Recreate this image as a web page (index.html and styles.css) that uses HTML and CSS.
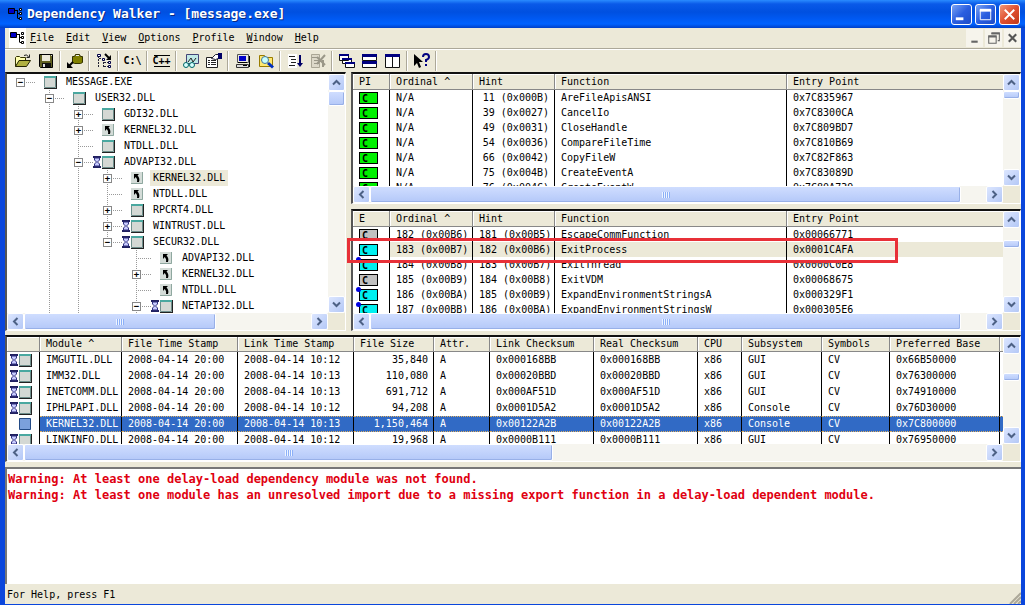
FILE: index.html
```html
<!DOCTYPE html>
<html lang="en">
<head>
<meta charset="utf-8">
<title>Dependency Walker - [message.exe]</title>
<link rel="stylesheet" href="styles.css">
</head>
<body>
<svg class="defs" aria-hidden="true">
  <symbol id="app" viewBox="0 0 15 14"><path fill="#0000c8" stroke="#000" d="M.5 1.5h6v5h-6z"/><path fill="none" stroke="#000" d="M7 3.5h3M9.5 3v8M9.5 6.500h3M9.5 11.5h3"/><path fill="#fff" stroke="#000" d="M11.500 1.500h2v2h-2zM11.500 5.500h2v2h-2zM11.500 10.500h2v2h-2z"/></symbol>
  <symbol id="mod" viewBox="0 0 24 16"><path fill="#d4d8d4" stroke="#6f8f8c" d="M9.500 2.500h11v11h-11z"/><path fill="#4aa8a0" d="M9 2h12v2H9z"/><path stroke="#222" fill="none" d="M21.500 2v12.500M9 14.500h13"/></symbol>
  <symbol id="dmod" viewBox="0 0 24 16"><use href="#mod"/><path fill="#202060" d="M0 2h8v2H0zM0 12h8v2H0z"/><path fill="#c8ccff" stroke="#303080" d="M1.500 4v2l2 2-2 2v2h5v-2l-2-2 2-2V4z"/></symbol>
  <symbol id="dup" viewBox="0 0 24 16"><path fill="#d4dcd8" d="M9 2h12v12H9z"/><path fill="none" stroke="#8fa8a0" d="M20.500 2v11.500H9"/><path fill="#000" d="M12 4h5l-1.500 1.500C17 7 18 9 17 12h-2c.5-2 0-3.500-1.300-5L12 9z"/></symbol>
  <symbol id="selmod" viewBox="0 0 24 16"><path fill="#7ba0dc" stroke="#234a86" d="M9.500 2.500h11v11h-11z"/></symbol>
  <symbol id="up" viewBox="0 0 9 9"><path fill="none" stroke="#4d6185" stroke-width="2" d="M1 6.500 4.500 3 8 6.500"/></symbol>
  <symbol id="down" viewBox="0 0 9 9"><path fill="none" stroke="#4d6185" stroke-width="2" d="M1 2.500 4.500 6 8 2.500"/></symbol>
  <symbol id="left" viewBox="0 0 9 9"><path fill="none" stroke="#4d6185" stroke-width="2" d="M6.500 1 3 4.500 6.500 8"/></symbol>
  <symbol id="right" viewBox="0 0 9 9"><path fill="none" stroke="#4d6185" stroke-width="2" d="M2.500 1 6 4.500 2.500 8"/></symbol>
</svg>
<div class="window">
  <header class="titlebar">
    <svg class="app-icon"><use href="#app"/></svg>
    <h1>Dependency Walker - [message.exe]</h1>
    <button class="cap" aria-label="Minimize"><svg viewBox="0 0 20 20"><path fill="#fff" d="M4 13h8v3H4z"/></svg></button>
    <button class="cap" aria-label="Maximize"><svg viewBox="0 0 20 20"><path fill="none" stroke="#fff" d="M4.500 5v10.500h11V5"/><path fill="#fff" d="M4 4h12v3H4z"/></svg></button>
    <button class="cap close" aria-label="Close"><svg viewBox="0 0 20 20"><path stroke="#fff" stroke-width="2" d="m5 5 10 10M15 5 5 15"/></svg></button>
  </header>
  <nav class="menubar">
    <span class="menu-icon"><svg class="app-icon"><use href="#app"/></svg></span>
    <button class="menu"><u>F</u>ile</button>
    <button class="menu"><u>E</u>dit</button>
    <button class="menu"><u>V</u>iew</button>
    <button class="menu"><u>O</u>ptions</button>
    <button class="menu"><u>P</u>rofile</button>
    <button class="menu"><u>W</u>indow</button>
    <button class="menu"><u>H</u>elp</button>
    <span class="mdi">
      <button aria-label="Minimize document"><svg viewBox="0 0 16 16"><path fill="#666" d="M5 10h6v2H5z"/></svg></button>
      <button aria-label="Restore document"><svg viewBox="0 0 16 16"><path fill="none" stroke="#666" d="M3.500 6v6.500h7V6M6 3.500h7.500V10H12"/><path fill="#666" d="M3 5h8v2H3zM6 2h8v2H6z"/></svg></button>
      <button aria-label="Close document"><svg viewBox="0 0 16 16"><path stroke="#555" stroke-width="2" d="m4.500 4 7 7M11.500 4l-7 7"/></svg></button>
    </span>
  </nav>
  <div class="toolbar">
    <button aria-label="Open"><svg viewBox="0 0 16 16"><path fill="#ffffb0" stroke="#333300" d="M.5 13.500v-9l1-1h3l1 1h5v3"/><path fill="#b0b040" stroke="#222200" d="M.5 13.500 4 7.500h11.500l-4 6z"/><path fill="none" stroke="#222" d="M9 2.500q3-2 4.500 1.500M14.500 1.500v3h-3"/></svg></button>
    <button aria-label="Save"><svg viewBox="0 0 16 16"><path fill="#606020" stroke="#000" d="M1.500 1.500h13v13h-12l-1-1z"/><path fill="#ece9d8" d="M4 2h8v6H4z"/><path fill="#111" d="M4 10h9v4H4z"/><path fill="#ddd" d="M5 11h2v3H5zM13 2h1v1h-1z"/></svg></button>
    <i></i>
    <button aria-label="Auto expand"><svg viewBox="0 0 16 16"><path fill="#808000" stroke="#333300" d="M5.500 3.500h2l1-2h4l1 2h2v6l-2 1h-6l-2-1z"/><path fill="#eee" d="M9 2h3v1H9z"/><path fill="none" stroke="#000" stroke-width="2" d="m6 9-4 4"/><path fill="#000" d="M0 9v6h6z"/></svg></button>
    <i></i>
    <button aria-label="Full paths"><svg viewBox="0 0 16 16"><path fill="none" stroke="#223" stroke-dasharray="2 1" d="M2.500 3v11M3 5.500h3M7.500 6v8M8 9.500h4M8 13.500h4"/><path fill="#fff" stroke="#004" d="M1.500 1.500h3v2h-3zM6.500 5.500h2v2h-2zM12.500 8.500h2v2h-2zM12.500 12.500h2v2h-2z"/><path fill="none" stroke="#000" stroke-width="2" d="m9 1 5 5"/><path d="M15 2v5h-5z"/></svg></button>
    <i></i>
    <button class="word">C:\</button>
    <i></i>
    <button class="word lined">C++</button>
    <i></i>
    <button aria-label="View module"><svg viewBox="0 0 16 16"><path fill="#bfe8e6" stroke="#447" d="M3.500 1.500h12v9h-12z"/><path fill="none" stroke="#222" d="m5 9 3-4 2 4 3-4"/><circle cx="3" cy="12" r="2.500" fill="#d8ffff" stroke="#066"/><circle cx="9" cy="12" r="2.500" fill="#d8ffff" stroke="#066"/></svg></button>
    <button aria-label="Properties"><svg viewBox="0 0 16 16"><path fill="#fff" stroke="#222" d="M.5 4.500h11v10H.5z"/><path stroke="#222" d="M2 7.500h2m1 0h5M2 9.500h2m1 0h5M2 11.500h2m1 0h5"/><path fill="#fff" stroke="#223" d="m5.500 5.500 4-4h3v4l-3 1z"/><path fill="#006" d="M12 0h4v6h-4z"/></svg></button>
    <i></i>
    <button aria-label="System information"><svg viewBox="0 0 16 16"><path fill="#e8e8e0" stroke="#555" d="M2.500 1.500h11v8h-11z"/><path fill="#0000c8" d="M4 3h7v5H4z"/><path fill="#ddd" stroke="#333" d="M1.500 11.500h12v3h-12z"/><path fill="#000" d="M3 9h9v1H3zM8 12h4v1H8zM14 3h1v11h-1z"/></svg></button>
    <button aria-label="Search order"><svg viewBox="0 0 16 16"><path fill="#ffe870" stroke="#997c00" d="M1.500 2.500h5l1 2h7v9h-13z"/><circle cx="7" cy="7" r="3.500" fill="#c8ffff" stroke="#479"/><path stroke="#0030c0" stroke-width="3" d="m10 10 5 4.500"/></svg></button>
    <i></i>
    <button aria-label="Start profiling"><svg viewBox="0 0 16 16"><path fill="#fff" d="M1 1h9v14H1z"/><path stroke="#222" d="M2 3.500h6M4 6.500h5M4 9.500h5M2 12.500h6"/><path stroke="#006" stroke-width="2" d="M13 2v9"/><path fill="#006" d="M10 10h6l-3 4z"/></svg></button>
    <button disabled aria-label="Stop profiling"><svg viewBox="0 0 16 16"><path fill="#ddd9c9" stroke="#aaa695" d="M1.500 1.500h8v13h-8z"/><path stroke="#9a9788" d="M2 4.500h6M4 7.500h5M4 10.500h5"/><path stroke="#9a9788" stroke-width="2" d="m7 4 8 8M15 2l-8 9M13 7v7"/></svg></button>
    <i></i>
    <button aria-label="Cascade"><svg viewBox="0 0 16 16"><path fill="#fff" stroke="#111" d="M.5 1.500h9v6h-9zM3.500 5.500h9v5h-9zM6.500 9.500h9v5h-9z"/><path fill="#000080" d="M0 1h10v2H0zM3 5h10v2H3zM6 9h10v2H6z"/></svg></button>
    <button aria-label="Tile horizontally"><svg viewBox="0 0 16 16"><path fill="#fff" stroke="#111" d="M.5 1.500h14v6H.5zM.5 8.500h14v6H.5z"/><path fill="#000080" d="M0 1h15v3H0zM0 8h15v3H0z"/></svg></button>
    <button aria-label="Tile vertically"><svg viewBox="0 0 16 16"><path fill="#fff" stroke="#111" d="M.5 1.500h7v13h-7zM7.500 1.500h7v13h-7z"/><path fill="#000080" d="M0 1h15v3H0z"/></svg></button>
    <i></i>
    <button aria-label="Context help"><svg viewBox="0 0 16 16"><path d="M0 1v12l3-3 2 5 2-1-2-5h4z"/><path fill="none" stroke="#000080" stroke-width="2" d="M9 4q0-3 3-3t3 3q0 2-3 3v2M12 11v2"/></svg></button>
    <i></i>
  </div>

  <main class="work">
    <section class="pane tree-pane" aria-label="Module dependency tree">
      <div class="view">
        <ul class="tree">
          <li><b class="n root"><em>−</em></b><svg><use href="#mod"/></svg><span>MESSAGE.EXE</span></li>
          <li><b></b><b class="n"><em>−</em></b><svg><use href="#mod"/></svg><span>USER32.DLL</span></li>
          <li><b></b><b class="v"></b><b class="n"><em>+</em></b><svg><use href="#mod"/></svg><span>GDI32.DLL</span></li>
          <li><b></b><b class="v"></b><b class="n"><em>+</em></b><svg><use href="#dup"/></svg><span>KERNEL32.DLL</span></li>
          <li><b></b><b class="v"></b><b class="n"></b><svg><use href="#mod"/></svg><span>NTDLL.DLL</span></li>
          <li><b></b><b class="v"></b><b class="n"><em>−</em></b><svg><use href="#dmod"/></svg><span>ADVAPI32.DLL</span></li>
          <li><b></b><b class="v"></b><b class="v"></b><b class="n"><em>+</em></b><svg><use href="#dup"/></svg><span class="picked">KERNEL32.DLL</span></li>
          <li><b></b><b class="v"></b><b class="v"></b><b class="n"></b><svg><use href="#dup"/></svg><span>NTDLL.DLL</span></li>
          <li><b></b><b class="v"></b><b class="v"></b><b class="n"><em>+</em></b><svg><use href="#mod"/></svg><span>RPCRT4.DLL</span></li>
          <li><b></b><b class="v"></b><b class="v"></b><b class="n"><em>+</em></b><svg><use href="#dmod"/></svg><span>WINTRUST.DLL</span></li>
          <li><b></b><b class="v"></b><b class="v"></b><b class="n last"><em>−</em></b><svg><use href="#dmod"/></svg><span>SECUR32.DLL</span></li>
          <li><b></b><b class="v"></b><b class="v"></b><b></b><b class="n"></b><svg><use href="#dup"/></svg><span>ADVAPI32.DLL</span></li>
          <li><b></b><b class="v"></b><b class="v"></b><b></b><b class="n"><em>+</em></b><svg><use href="#dup"/></svg><span>KERNEL32.DLL</span></li>
          <li><b></b><b class="v"></b><b class="v"></b><b></b><b class="n"></b><svg><use href="#dup"/></svg><span>NTDLL.DLL</span></li>
          <li><b></b><b class="v"></b><b class="v"></b><b></b><b class="n"><em>−</em></b><svg><use href="#dmod"/></svg><span>NETAPI32.DLL</span></li>
        </ul>
      </div>
      <div class="vbar"><button aria-label="Scroll up"><svg><use href="#up"/></svg></button><div class="track"><span class="thumb"></span></div><button aria-label="Scroll down"><svg><use href="#down"/></svg></button></div>
      <div class="hbar"><button aria-label="Scroll left"><svg><use href="#left"/></svg></button><div class="track"><span class="thumb w-tree"></span></div><button aria-label="Scroll right"><svg><use href="#right"/></svg></button></div>
    </section>

    <div class="functions">
      <section class="pane" aria-label="Imports">
        <div class="view">
          <table class="list fn">
            <colgroup><col class="c37"><col class="c83"><col class="c82"><col class="c232"><col></colgroup>
            <thead><tr><th>PI</th><th>Ordinal ^</th><th>Hint</th><th>Function</th><th>Entry Point</th></tr></thead>
            <tbody>
              <tr><td><span class="c green">C</span></td><td>N/A</td><td class="r">11 (0x000B)</td><td>AreFileApisANSI</td><td>0x7C835967</td></tr>
              <tr><td><span class="c green">C</span></td><td>N/A</td><td class="r">39 (0x0027)</td><td>CancelIo</td><td>0x7C8300CA</td></tr>
              <tr><td><span class="c green">C</span></td><td>N/A</td><td class="r">49 (0x0031)</td><td>CloseHandle</td><td>0x7C809BD7</td></tr>
              <tr><td><span class="c green">C</span></td><td>N/A</td><td class="r">54 (0x0036)</td><td>CompareFileTime</td><td>0x7C810B69</td></tr>
              <tr><td><span class="c green">C</span></td><td>N/A</td><td class="r">66 (0x0042)</td><td>CopyFileW</td><td>0x7C82F863</td></tr>
              <tr><td><span class="c green">C</span></td><td>N/A</td><td class="r">75 (0x004B)</td><td>CreateEventA</td><td>0x7C83089D</td></tr>
              <tr><td><span class="c green">C</span></td><td>N/A</td><td class="r">76 (0x004C)</td><td>CreateEventW</td><td>0x7C80A739</td></tr>
            </tbody>
          </table>
        </div>
        <div class="vbar"><button aria-label="Scroll up"><svg><use href="#up"/></svg></button><div class="track"><span class="thumb short"></span></div><button aria-label="Scroll down"><svg><use href="#down"/></svg></button></div>
        <div class="hbar"><button aria-label="Scroll left"><svg><use href="#left"/></svg></button><div class="track"><span class="thumb w-fn"></span></div><button aria-label="Scroll right"><svg><use href="#right"/></svg></button></div>
      </section>

      <section class="pane exports" aria-label="Exports">
        <div class="view">
          <table class="list fn">
            <colgroup><col class="c37"><col class="c83"><col class="c82"><col class="c232"><col></colgroup>
            <thead><tr><th>E</th><th>Ordinal ^</th><th>Hint</th><th>Function</th><th>Entry Point</th></tr></thead>
            <tbody>
              <tr><td><span class="c grey">C</span></td><td>182 (0x00B6)</td><td class="r">181 (0x00B5)</td><td>EscapeCommFunction</td><td>0x00066771</td></tr>
              <tr class="soft"><td><span class="c cyan">C</span></td><td>183 (0x00B7)</td><td class="r">182 (0x00B6)</td><td>ExitProcess</td><td>0x0001CAFA</td></tr>
              <tr><td><span class="c cyan dot">C</span></td><td>184 (0x00B8)</td><td class="r">183 (0x00B7)</td><td>ExitThread</td><td>0x0000C0E8</td></tr>
              <tr><td><span class="c grey">C</span></td><td>185 (0x00B9)</td><td class="r">184 (0x00B8)</td><td>ExitVDM</td><td>0x00068675</td></tr>
              <tr><td><span class="c cyan dot">C</span></td><td>186 (0x00BA)</td><td class="r">185 (0x00B9)</td><td>ExpandEnvironmentStringsA</td><td>0x000329F1</td></tr>
              <tr><td><span class="c cyan dot">C</span></td><td>187 (0x00BB)</td><td class="r">186 (0x00BA)</td><td>ExpandEnvironmentStringsW</td><td>0x000305E6</td></tr>
            </tbody>
          </table>
        </div>
        <div class="vbar"><button aria-label="Scroll up"><svg><use href="#up"/></svg></button><div class="track"><span class="thumb short mid"></span></div><button aria-label="Scroll down"><svg><use href="#down"/></svg></button></div>
        <div class="hbar"><button aria-label="Scroll left"><svg><use href="#left"/></svg></button><div class="track"><span class="thumb w-fn"></span></div><button aria-label="Scroll right"><svg><use href="#right"/></svg></button></div>
        <div class="marker"></div>
      </section>
    </div>
  </main>

  <section class="pane modules" aria-label="Modules">
    <div class="view">
      <table class="list mods">
        <colgroup><col class="c33"><col class="c82"><col class="c116"><col class="c116"><col class="c80"><col class="c56"><col class="c104"><col class="c104"><col class="c44"><col class="c80"><col class="c68"><col class="c110"><col></colgroup>
        <thead><tr><th></th><th>Module ^</th><th>File Time Stamp</th><th>Link Time Stamp</th><th>File Size</th><th>Attr.</th><th>Link Checksum</th><th>Real Checksum</th><th>CPU</th><th>Subsystem</th><th>Symbols</th><th>Preferred Base</th><th></th></tr></thead>
        <tbody>
          <tr><td><svg><use href="#dmod"/></svg></td><td>IMGUTIL.DLL</td><td>2008-04-14 20:00</td><td>2008-04-14 10:12</td><td class="r">35,840</td><td>A</td><td>0x000168BB</td><td>0x000168BB</td><td>x86</td><td>GUI</td><td>CV</td><td>0x66B50000</td><td></td></tr>
          <tr><td><svg><use href="#dmod"/></svg></td><td>IMM32.DLL</td><td>2008-04-14 20:00</td><td>2008-04-14 10:13</td><td class="r">110,080</td><td>A</td><td>0x00020BBD</td><td>0x00020BBD</td><td>x86</td><td>GUI</td><td>CV</td><td>0x76300000</td><td></td></tr>
          <tr><td><svg><use href="#dmod"/></svg></td><td>INETCOMM.DLL</td><td>2008-04-14 20:00</td><td>2008-04-14 10:13</td><td class="r">691,712</td><td>A</td><td>0x000AF51D</td><td>0x000AF51D</td><td>x86</td><td>GUI</td><td>CV</td><td>0x74910000</td><td></td></tr>
          <tr><td><svg><use href="#dmod"/></svg></td><td>IPHLPAPI.DLL</td><td>2008-04-14 20:00</td><td>2008-04-14 10:12</td><td class="r">94,208</td><td>A</td><td>0x0001D5A2</td><td>0x0001D5A2</td><td>x86</td><td>Console</td><td>CV</td><td>0x76D30000</td><td></td></tr>
          <tr class="selected"><td><svg><use href="#selmod"/></svg></td><td>KERNEL32.DLL</td><td>2008-04-14 20:00</td><td>2008-04-14 10:13</td><td class="r">1,150,464</td><td>A</td><td>0x00122A2B</td><td>0x00122A2B</td><td>x86</td><td>Console</td><td>CV</td><td>0x7C800000</td><td></td></tr>
          <tr><td><svg><use href="#dmod"/></svg></td><td>LINKINFO.DLL</td><td>2008-04-14 20:00</td><td>2008-04-14 10:12</td><td class="r">19,968</td><td>A</td><td>0x0000B111</td><td>0x0000B111</td><td>x86</td><td>GUI</td><td>CV</td><td>0x76950000</td><td></td></tr>
        </tbody>
      </table>
    </div>
    <div class="vbar"><button aria-label="Scroll up"><svg><use href="#up"/></svg></button><div class="track"><span class="thumb short mid"></span></div><button aria-label="Scroll down"><svg><use href="#down"/></svg></button></div>
    <div class="hbar"><button aria-label="Scroll left"><svg><use href="#left"/></svg></button><div class="track"><span class="thumb w-mod"></span></div><button aria-label="Scroll right"><svg><use href="#right"/></svg></button></div>
  </section>

  <section class="log" aria-label="Log">
    <p>Warning: At least one delay-load dependency module was not found.</p>
    <p>Warning: At least one module has an unresolved import due to a missing export function in a delay-load dependent module.</p>
  </section>
  <footer class="status"><span>For Help, press F1</span><svg class="grip" viewBox="0 0 12 12"><path stroke="#aca899" stroke-width="2" d="M1 12 12 1M5 12l7-7M9 12l3-3"/></svg></footer>
</div>
</body>
</html>
```
FILE: styles.css
```css
* { box-sizing: border-box; }
body {
  margin: 0;
  font: 10px/16px "DejaVu Sans Mono", "Liberation Mono", monospace;
  color: #000;
}
button { font: inherit; color: inherit; margin: 0; padding: 0; border: 0; background: none; }
svg { display: block; flex: none; }
.defs { position: absolute; width: 0; height: 0; }

.window {
  height: 100vh;
  display: grid;
  grid-template-columns: minmax(0, 1fr);
  grid-template-rows: 28px 20px 24px minmax(0, 259fr) minmax(0, 131fr) minmax(0, 122fr) 20px;
  background: #ece9d8;
  border: solid #0a46dc;
  border-width: 0 4px 1px 5px;
}

/* Title bar */
.titlebar {
  display: flex;
  align-items: center;
  gap: 3px;
  margin: 0 -4px 0 -5px;
  padding: 0 5px 0 8px;
  background: linear-gradient(#2a8cff 0, #0a5ae8 4px, #0050e0 12px, #0058f0 18px, #0062ff 24px, #0040c8 28px);
}
.titlebar h1 {
  flex: 1;
  margin: 0;
  padding-left: 1px;
  font-size: 13px;
  line-height: 28px;
  color: #fff;
  text-shadow: 1px 1px #0a2a80;
}
.app-icon { width: 15px; height: 14px; }
.cap {
  width: 21px;
  height: 21px;
  border: 1px solid #fff;
  border-radius: 3px;
  background: linear-gradient(135deg, #7ba4f4, #2a5ee0 50%, #1c4cc8);
}
.close { background: linear-gradient(135deg, #f09878, #e05030 50%, #c03818); }

/* Menu bar */
.menubar { display: flex; align-items: center; gap: 12px; padding-left: 4px; }
.menu-icon { padding: 3px 1px; background: #fff; margin-right: -8px; }
.menu { line-height: 20px; }
.mdi { display: flex; gap: 2px; margin-left: auto; }
.mdi button { width: 17px; height: 18px; background: #f6f4ec; }

/* Toolbar */
.toolbar {
  display: flex;
  align-items: center;
  padding-left: 6px;
  border-top: 1px solid #aca899;
  box-shadow: inset 0 1px #fff;
}
.toolbar button { width: 23px; height: 22px; display: grid; place-items: center; }
.toolbar button svg { width: 16px; height: 16px; }
.toolbar i { width: 6px; height: 20px; display: flex; justify-content: center; }
.toolbar i::before { content: ""; width: 2px; background: linear-gradient(90deg, #aca899 50%, #fff 50%); }
.toolbar .word { font-weight: bold; line-height: 10px; }
.lined::before, .lined::after { content: ""; width: 16px; height: 1px; background: #000; }
.toolbar .lined { align-content: center; }

/* Panes */
.work {
  display: grid;
  grid-template-columns: minmax(0, 341fr) minmax(0, 670fr);
  grid-template-rows: minmax(0, 1fr);
  gap: 5px;
  min-height: 0;
}
.functions { display: grid; grid-template-rows: minmax(0, 132fr) minmax(0, 122fr); gap: 5px; min-height: 0; }
.pane {
  display: grid;
  grid-template-columns: minmax(0, 1fr) 17px;
  grid-template-rows: minmax(0, 1fr) 17px;
  min-height: 0;
  border-style: solid;
  border-width: 2px 1px 1px 2px;
  border-color: #111 #fff #fff #555;
}
.modules { margin-top: 4px; }
.view { overflow: hidden; background: #fff; }
.exports { position: relative; }
.marker {
  position: absolute;
  left: -6px;
  top: 27px;
  width: 551px;
  height: 25px;
  border: 3px solid #e83038;
}

/* Scroll bars */
.vbar, .hbar { display: flex; min-height: 0; background: #f6f5ef; }
.vbar { flex-direction: column; }
.vbar button, .hbar button {
  flex: none;
  width: 17px;
  height: 17px;
  display: grid;
  place-items: center;
  border: 1px solid #fff;
  border-radius: 2px;
  background: linear-gradient(135deg, #dce6ff, #b4c8f6);
}
.vbar svg, .hbar svg { width: 9px; height: 9px; }
.track { flex: 1; display: flex; min-width: 0; min-height: 0; }
.vbar .track { flex-direction: column; }
.thumb {
  border: 1px solid #fff;
  border-radius: 2px;
  background: linear-gradient(#cfddff, #b4c8f8);
  box-shadow: inset -1px -1px #98b0e8;
}
.vbar .thumb { flex: none; height: 15px; }
.vbar .short { height: 8px; }
.vbar .mid { margin-top: 12px; }
.modules .vbar .mid { margin-top: 19px; }
.hbar .thumb { display: grid; place-items: center; }
.hbar .thumb::before {
  content: "";
  width: 8px;
  height: 6px;
  background: repeating-linear-gradient(90deg, #eef4ff 0 1px, #8cb0f8 1px 2px);
}
.w-tree { width: 67%; }
.w-fn { width: 96%; }
.w-mod { width: 55%; }

/* Tree */
.tree { margin: 0; padding: 0; list-style: none; }
.tree li { display: flex; height: 16px; align-items: center; white-space: nowrap; }
.tree b {
  flex: none;
  width: 29px;
  height: 16px;
  display: flex;
  align-items: center;
  padding-left: 9px;
  background-repeat: no-repeat;
}
.tree .v, .tree .n {
  background-image: repeating-linear-gradient(#999 0 1px, #fff 1px 2px), repeating-linear-gradient(90deg, #999 0 1px, #fff 1px 2px);
  background-position: 13px 0, 13px 8px;
  background-size: 1px 16px, 0 0;
}
.tree .n { background-size: 1px 16px, 15px 1px; }
.tree .root { background-size: 0 0, 15px 1px; }
.tree .last { background-size: 1px 8px, 15px 1px; }
.tree em {
  width: 9px;
  height: 9px;
  border: 1px solid #888;
  background: #fff;
  font: bold 9px/7px "DejaVu Sans Mono", monospace;
  text-align: center;
}
.tree svg { width: 24px; height: 16px; margin-left: -1px; }
.tree span { margin-left: 4px; padding: 0 3px; }
.picked { background: #ece9d8; }

/* Lists */
.list { width: 100%; table-layout: fixed; border-collapse: separate; border-spacing: 0; }
.list th, .list td {
  overflow: hidden;
  white-space: nowrap;
  text-align: left;
  font-weight: normal;
  padding: 0 5px 0 6px;
}
.list th {
  height: 16px;
  line-height: 15px;
  background: #ece9d8;
  border-right: 1px solid #888;
  border-bottom: 1px solid #888;
  box-shadow: inset 1px 1px #fff;
}
.mods th { height: 15px; line-height: 14px; }
.list td { border-right: 1px solid #000; }
.list th:last-child, .list td:last-child { border-right: 0; }
.fn td { height: 15px; line-height: 15px; }
.mods td { height: 16px; line-height: 16px; }
.list .r { text-align: right; }
.mods td:first-child { padding: 0 0 0 3px; }
.mods svg { width: 24px; height: 16px; }
.c33 { width: 33px; }
.c37 { width: 37px; }
.c44 { width: 44px; }
.c56 { width: 56px; }
.c68 { width: 68px; }
.c80 { width: 80px; }
.c82 { width: 82px; }
.c83 { width: 83px; }
.c104 { width: 104px; }
.c110 { width: 110px; }
.c116 { width: 116px; }
.c232 { width: 232px; }
.c {
  display: block;
  position: relative;
  width: 19px;
  height: 12px;
  padding-left: 2px;
  border: 1px solid #000;
  font: bold 10px/11px "DejaVu Sans Mono", monospace;
}
.green { background: #00f000; }
.cyan { background: #00f0f0; }
.grey { background: #c0c0c0; }
.fn td:first-child { overflow: visible; }
.dot::before {
  content: "";
  position: absolute;
  left: -4px;
  top: -3px;
  width: 5px;
  height: 5px;
  border-radius: 50%;
  background: #0000e0;
}
.soft td { background: #ece9d8; }
.soft td:first-child { background: #fff; }
.selected td:not(:first-child) {
  background: #316ac5;
  color: #fff;
  border-top: 1px dotted #e0b060;
  border-bottom: 1px dotted #e0b060;
  line-height: 14px;
}

/* Log and status bar */
.log {
  margin-top: 5px;
  padding: 2px 1px;
  overflow: hidden;
  background: #fff;
  border: solid #777;
  border-width: 2px 0 0 2px;
  font-size: 12px;
  font-weight: bold;
  color: #e00010;
}
.log p { margin: 0; line-height: 16px; white-space: nowrap; }
.status { display: flex; align-items: center; justify-content: space-between; padding-left: 2px; padding-top: 2px; }
.grip { width: 12px; height: 12px; align-self: flex-end; }
```
